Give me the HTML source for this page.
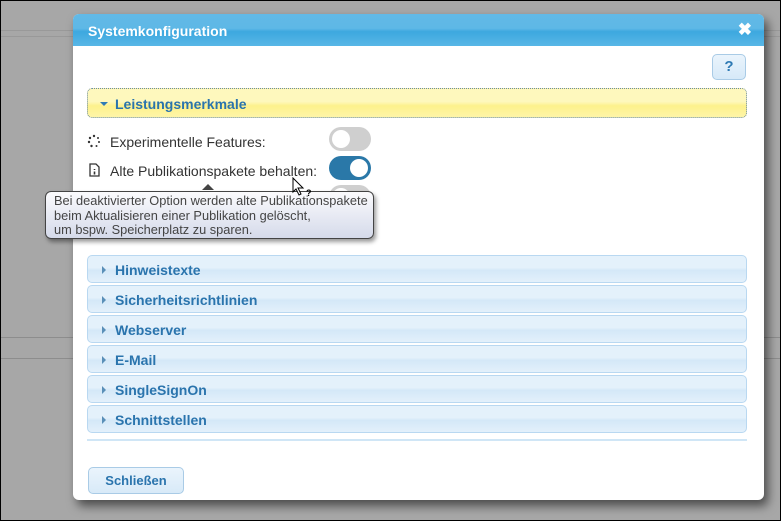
<!DOCTYPE html>
<html><head><meta charset="utf-8"><style>
*{box-sizing:border-box;margin:0;padding:0}
body{width:781px;height:521px;overflow:hidden;background:#a7a7a7;font-family:"Liberation Sans",sans-serif;position:relative}
.bd{position:absolute;left:0;top:0;width:781px;height:521px;border:1px solid #000;z-index:9;pointer-events:none}
.ln{position:absolute;height:1px;background:#8d8d8d}
.dlg{position:absolute;left:73px;top:14px;width:691px;height:486px;background:#fff;border-radius:6px;box-shadow:4px 6px 10px rgba(0,0,0,.55);overflow:hidden}
.tb{height:32px;background:linear-gradient(#62b9e6 0,#5eb8e6 45%,#3da8df 55%,#58b6e6 100%);color:#fff;font-weight:bold;font-size:14px;padding:9px 0 0 15px}
.x{position:absolute;right:12px;top:6px;color:#fff;font-weight:bold;font-size:17px}
.help{position:absolute;left:639px;top:40px;width:34px;height:26px;border:1px solid #a9cbe6;border-radius:5px;background:linear-gradient(#eaf4fc,#d6e9f8);color:#2e7ab4;font-weight:bold;font-size:15px;text-align:center;line-height:24px}
.acc{position:absolute;left:14px;width:660px;height:28px;border:1px solid #b9d8f1;border-radius:5px;background:linear-gradient(#e4f1fb 0,#e4f1fb 45%,#d4e8f8 55%,#e3f0fb 100%);color:#2a74ad;font-weight:bold;font-size:14px;padding:6px 0 0 27px}
.acc:before{content:"";position:absolute;left:14px;top:10px;border-left:4px solid #5a8fb8;border-top:4px solid transparent;border-bottom:4px solid transparent}
.y{top:74px;height:30px;background:linear-gradient(#fef8bd 0,#fef8bd 45%,#fdf18c 60%,#fef5a8 100%);border:1px dotted #6a8ca6;padding-top:7px}
.y:before{left:12px;top:13px;border-top:4px solid #2f7bb5;border-left:4px solid transparent;border-right:4px solid transparent;border-bottom:0}
.lab{position:absolute;left:37px;font-size:14px;color:#333}
.tg{position:absolute;left:256px;width:42px;height:24px;border-radius:12px;background:#cfcfcf}
.tg:after{content:"";position:absolute;left:3px;top:3px;width:18px;height:18px;border-radius:50%;background:#fff}
.on{background:#2a78a8}.on:after{left:21px}
.tip{position:absolute;left:45px;top:191px;width:329px;height:48px;border:1px solid #444;border-radius:6px;background:linear-gradient(#fbfbfd,#d5daea);box-shadow:2px 3px 4px rgba(0,0,0,.4);font-size:12.8px;color:#444;padding:2px 0 0 8px;line-height:14.5px;white-space:nowrap}
.arr{position:absolute;left:202px;top:184px;border-bottom:6px solid #444;border-left:6px solid transparent;border-right:6px solid transparent}
.btn{position:absolute;left:15px;top:453px;width:96px;height:27px;border:1px solid #a9cbe6;border-radius:5px;background:linear-gradient(#eaf4fc,#d8eaf8);color:#2a74ad;font-weight:bold;font-size:13px;text-align:center;line-height:25px}
</style></head><body>
<div class="bd"></div>
<div class="ln" style="left:0;top:30px;width:781px;background:#999"></div>
<div class="ln" style="left:0;top:36px;width:781px;background:#999"></div>
<div class="ln" style="left:0;top:337px;width:781px"></div>
<div class="ln" style="left:0;top:358px;width:781px"></div>
<div class="dlg">
<div class="tb">Systemkonfiguration</div><div class="x">✖</div>
<div class="help">?</div>
<div class="acc y">Leistungsmerkmale</div>
<svg style="position:absolute;left:14px;top:120px" width="14" height="14" viewBox="0 0 14 14" fill="#333"><circle cx="7" cy="2" r="1.2"/><circle cx="11" cy="4" r="1"/><circle cx="12" cy="8" r="1"/><circle cx="9.5" cy="12" r="1"/><circle cx="4.5" cy="12" r="1.2"/><circle cx="2" cy="8" r="1.2"/><circle cx="3" cy="4" r="1.2"/></svg>
<div class="lab" style="top:120px">Experimentelle Features:</div>
<svg style="position:absolute;left:16px;top:149px" width="11" height="14" viewBox="0 0 11 14" fill="none" stroke="#333" stroke-width="1.3"><path d="M1 1h6l3 3v9H1z"/><path d="M5.5 6v1M5.5 8.5v3" stroke-width="1.6"/></svg>
<div class="lab" style="top:149px">Alte Publikationspakete behalten:</div>
<div class="tg" style="top:113px"></div>
<div class="tg on" style="top:142px"></div>
<div class="tg" style="top:171px"></div>
<div class="acc" style="top:241px">Hinweistexte</div>
<div class="acc" style="top:271px">Sicherheitsrichtlinien</div>
<div class="acc" style="top:301px">Webserver</div>
<div class="acc" style="top:331px">E-Mail</div>
<div class="acc" style="top:361px">SingleSignOn</div>
<div class="acc" style="top:391px">Schnittstellen</div>
<div style="position:absolute;left:14px;top:425px;width:660px;height:2px;background:#d0e6f6"></div>
<div class="btn">Schließen</div>
</div>
<div class="arr"></div>
<div class="tip">Bei deaktivierter Option werden alte Publikationspakete<br>beim Aktualisieren einer Publikation gelöscht,<br>um bspw. Speicherplatz zu sparen.</div>
<svg style="position:absolute;left:292px;top:177px" width="22" height="22" viewBox="0 0 22 22"><path d="M1 1v14l3-3 3 6 2-1-3-6h5z" fill="#fff" stroke="#000"/><text x="14" y="19" font-size="9" font-family="Liberation Sans" font-weight="bold" fill="#000">?</text></svg>
</body></html>
